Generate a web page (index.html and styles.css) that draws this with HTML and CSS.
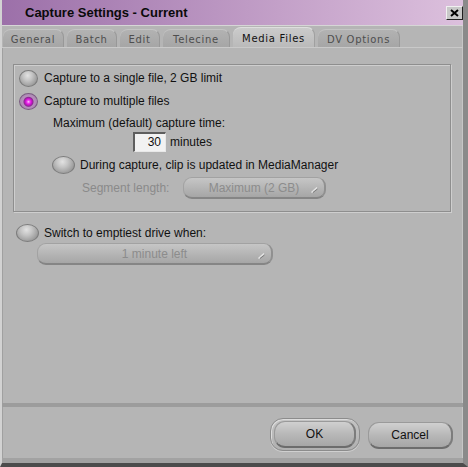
FILE: index.html
```html
<!DOCTYPE html>
<html lang="en">
<head>
    <meta charset="UTF-8">
    <title>Capture Settings - Current</title>
    <link rel="stylesheet" href="styles.css">
</head>
<body>
    <div class="window">
        <div class="titlebar">
            <span class="title">Capture Settings - Current</span>
            <span class="close">
                <svg width="9" height="8" viewBox="0 0 9 8"><path d="M1 1 L8 7 M8 1 L1 7" stroke="#000" stroke-width="2"/></svg>
            </span>
        </div>
        <div class="tabs">
            <div class="tab w-general">General</div>
            <div class="tab w-batch">Batch</div>
            <div class="tab w-edit">Edit</div>
            <div class="tab w-telecine">Telecine</div>
            <div class="tab active w-media">Media Files</div>
            <div class="tab w-dv">DV Options</div>
        </div>
        <div class="pane">
            <div class="group">
                <div class="row first">
                    <span class="radio"></span>
                    <span>Capture to a single file, 2 GB limit</span>
                </div>
                <div class="row second">
                    <span class="radio on"></span>
                    <span>Capture to multiple files</span>
                </div>
                <div class="sub">
                    <div class="caption">Maximum (default) capture time:</div>
                    <div class="time-row">
                        <span class="field">30</span>
                        <span>minutes</span>
                    </div>
                    <div class="row update">
                        <span class="radio big"></span>
                        <span>During capture, clip is updated in MediaManager</span>
                    </div>
                    <div class="segment">
                        <span class="muted">Segment length:</span>
                        <span class="select seg-select">Maximum (2 GB)
                            <svg class="arrow" width="7" height="6" viewBox="0 0 7 6"><path d="M0.5 5.5 L6 0.5" stroke="#e4e4e4" stroke-width="1.4"/><path d="M2 5.5 L6.5 2" stroke="#7a7a7a" stroke-width="1"/></svg>
                        </span>
                    </div>
                </div>
            </div>
            <div class="row switch">
                <span class="radio big"></span>
                <span>Switch to emptiest drive when:</span>
            </div>
            <span class="select drive-select">1 minute left
                <svg class="arrow" width="7" height="6" viewBox="0 0 7 6"><path d="M0.5 5.5 L6 0.5" stroke="#e4e4e4" stroke-width="1.4"/><path d="M2 5.5 L6.5 2" stroke="#7a7a7a" stroke-width="1"/></svg>
            </span>
        </div>
        <div class="footer">
            <div class="ok-ring">
                <span class="button ok">OK</span>
            </div>
            <span class="button cancel">Cancel</span>
        </div>
    </div>
</body>
</html>
```

FILE: styles.css
```css
body {
    margin: 0;
    padding: 0;
    background-color: #b5b5b5;
    font-family: 'Liberation Sans', Arial, sans-serif;
    font-size: 12px;
    color: #111;
}
.window {
    width: 468px;
    height: 467px;
    box-sizing: border-box;
    display: flex;
    flex-direction: column;
    background-color: #b5b5b5;
    border-left: 2px solid #d2d2d2;
    border-right: 5px solid #8a8a8a;
    border-bottom: 4px solid #4c4c4c;
    box-shadow: inset -1px 0 0 #c6c6c6;
}
.titlebar {
    height: 25px;
    flex: none;
    display: flex;
    align-items: center;
    justify-content: space-between;
    padding: 0 0 0 23px;
    background: linear-gradient(to right, #9c70a9, #c3a0c8 60%, #dcc0dd);
    border-bottom: 1px solid #d6d6d6;
}
.title {
    font-weight: bold;
    font-size: 13px;
    color: #0a0a0a;
}
.close {
    width: 15px;
    height: 12px;
    display: flex;
    align-items: center;
    justify-content: center;
    background-color: #c8c8c8;
    border-top: 1px solid #f0f0f0;
    border-left: 1px solid #f0f0f0;
    border-right: 1px solid #202020;
    border-bottom: 1px solid #202020;
}
.tabs {
    height: 21px;
    flex: none;
    display: flex;
    align-items: flex-end;
    gap: 3px;
    padding-left: 1px;
    font-family: 'DejaVu Sans', Verdana, sans-serif;
    font-size: 10px;
    letter-spacing: 0.7px;
}
.tab {
    height: 18px;
    box-sizing: border-box;
    display: flex;
    align-items: center;
    justify-content: center;
    padding-top: 1px;
    color: #4e4e4e;
    background: linear-gradient(#b2b2b2, #a6a6a6);
    border-top: 1px solid #c4c4c4;
    border-right: 1px solid #989898;
    border-radius: 8px 8px 0 0;
}
.tab.active {
    height: 21px;
    margin-bottom: -1px;
    color: #111;
    background: linear-gradient(#cbcbcb, #b9b9b9);
    border-top: 1px solid #dedede;
    border-right: 1px solid #a0a0a0;
}
.w-general { width: 61px; }
.w-batch { width: 50px; }
.w-edit { width: 40px; }
.w-telecine { width: 67px; }
.w-media { width: 82px; }
.w-dv { width: 82px; }
.pane {
    height: 356px;
    flex: none;
    box-sizing: border-box;
    border-top: 1px solid #c9c9c9;
    padding: 16px 12px 0 11px;
    box-shadow: inset 1px 0 0 #a0a0a0;
}
.group {
    height: 148px;
    box-sizing: border-box;
    border: 1px solid #8e8e8e;
    box-shadow: inset 1px 1px 0 #cecece, 1px 1px 0 #cecece;
    padding: 4px 0 0 5px;
}
.row {
    display: flex;
    align-items: center;
    height: 18px;
}
.row.second {
    margin-top: 5px;
}
.radio {
    width: 17px;
    height: 15px;
    flex: none;
    margin-right: 6px;
    border-radius: 50%;
    border: 1px solid #7c7c7c;
    background: radial-gradient(ellipse at 45% 30%, #e2e2e2 0%, #c4c4c4 35%, #9a9a9a 75%, #8a8a8a 100%);
}
.radio.big {
    width: 21px;
    height: 16px;
    margin-right: 5px;
}
.radio.on {
    border-color: #7a5c80;
    background: radial-gradient(circle at 50% 52%, #ffd0ff 0, #f040f0 1.5px, #d010d0 3px, #8a2a90 4.5px, #b690bc 5.5px, #a080a8 100%);
}
.sub {
    margin-left: 34px;
}
.caption {
    height: 16px;
    line-height: 16px;
    margin-top: 5px;
}
.time-row {
    display: flex;
    align-items: center;
    height: 21px;
    margin-left: 80px;
}
.field {
    width: 26px;
    height: 17px;
    line-height: 17px;
    text-align: right;
    padding-right: 4px;
    margin-right: 4px;
    background-color: #f2f2f2;
    border-top: 2px solid #5e5e5e;
    border-left: 2px solid #5e5e5e;
    border-bottom: 1px solid #e8e8e8;
    border-right: 1px solid #e8e8e8;
}
.row.update {
    margin-top: 4px;
    margin-left: -1px;
}
.segment {
    display: flex;
    align-items: center;
    height: 22px;
    margin-top: 3px;
    margin-left: 29px;
}
.muted {
    color: #8a8a8a;
    width: 101px;
}
.select {
    position: relative;
    display: flex;
    align-items: center;
    justify-content: center;
    box-sizing: border-box;
    height: 22px;
    color: #8c8c8c;
    border-radius: 9px;
    background: linear-gradient(#c6c6c6, #b4b4b4 55%, #a6a6a6);
    border: 1px solid #a2a2a2;
    border-bottom: 2px solid #858585;
    border-right: 2px solid #909090;
}
.seg-select {
    width: 143px;
}
.arrow {
    position: absolute;
    right: 6px;
    bottom: 4px;
}
.row.switch {
    height: 19px;
    margin-top: 11px;
    margin-left: 3px;
}
.drive-select {
    width: 236px;
    margin-top: 1px;
    margin-left: 24px;
}
.footer {
    height: 60px;
    flex: none;
    box-sizing: border-box;
    display: flex;
    justify-content: flex-end;
    align-items: flex-start;
    padding: 11px 10px 0 0;
    border-top: 4px solid #9c9c9c;
    border-bottom: 5px solid #a2a2a2;
    box-shadow: inset 1px 0 0 #a0a0a0;
}
.ok-ring {
    width: 90px;
    height: 33px;
    box-sizing: border-box;
    display: flex;
    align-items: center;
    justify-content: center;
    border-radius: 13px;
    border: 1px solid #8c8c8c;
    background: linear-gradient(#c4c4c4, #b0b0b0);
    box-shadow: inset 1px 1px 0 #dcdcdc, 0 1px 0 #d0d0d0;
}
.button {
    display: flex;
    align-items: center;
    justify-content: center;
    box-sizing: border-box;
    border-radius: 11px;
    background: linear-gradient(#d0d0d0, #b8b8b8 50%, #a6a6a6);
    border: 1px solid #9a9a9a;
    border-bottom: 2px solid #6c6c6c;
    border-right: 2px solid #7c7c7c;
    color: #111;
}
.ok {
    width: 82px;
    height: 27px;
}
.cancel {
    width: 85px;
    height: 27px;
    margin-left: 8px;
    margin-top: 4px;
}
```
